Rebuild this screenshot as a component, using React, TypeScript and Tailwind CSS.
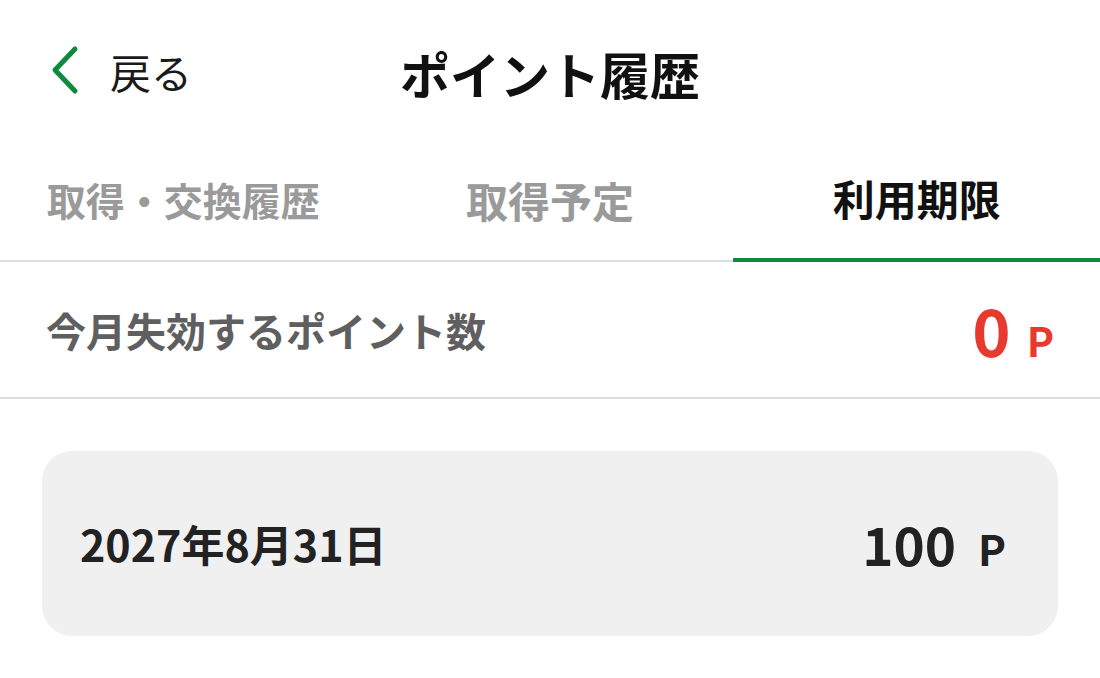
import React from "react";

const font = {
  fontFamily: '"Noto Sans CJK JP", "Noto Sans", sans-serif',
};

// first label is shrunk to fit, like in the app
const tabs = [
  { label: "取得・交換履歴", size: "text-[39px]" },
  { label: "取得予定", size: "text-[42px]" },
  { label: "利用期限", size: "text-[42px]" },
];

// back chevron
const ChevronLeft = () => (
  <svg width="30" height="50" viewBox="0 0 30 50" fill="none" className="-mt-[8px]">
    <polyline
      points="25,4 5,25 25,46"
      stroke="#0d8a3e"
      strokeWidth="5"
      strokeLinecap="round"
      strokeLinejoin="round"
    />
  </svg>
);

const App = () => {
  const active = 2;

  return (
    <div className="w-[1100px] h-[678px] bg-white overflow-hidden" style={font}>
      {/* header */}
      <div className="grid grid-cols-[1fr_auto_1fr] items-center h-[148px]">
        <div className="flex items-center pl-[50px] gap-[30px]">
          <ChevronLeft />
          <span className="text-[41px] text-[#1a1a1a] -mt-[4px]">戻る</span>
        </div>
        <h1 className="text-[50px] font-bold text-[#111] -mt-[2px]">ポイント履歴</h1>
        <div />
      </div>

      {/* tabs */}
      <div className="grid grid-cols-3 h-[114px]">
        {tabs.map((tab, i) => (
          <div
            key={tab.label}
            className={
              i === active
                ? `flex items-center justify-center border-b-4 border-[#0d8a3e] text-[#111] font-bold pb-[12px] ${tab.size}`
                : `flex items-center justify-center border-b-2 border-[#dddddd] text-[#9a9a9a] font-bold pb-[10px] ${tab.size}`
            }
          >
            {tab.label}
          </div>
        ))}
      </div>

      {/* expiring this month */}
      <div className="flex items-center justify-between h-[137px] pl-[46px] pr-[46px] border-b-2 border-[#dddddd]">
        <span className="text-[40px] font-bold text-[#5f5f5f]">今月失効するポイント数</span>
        <div className="flex items-baseline gap-[16px] text-[#e8392f] font-bold">
          <span className="text-[65px] leading-none">0</span>
          <span className="text-[41px] leading-none">P</span>
        </div>
      </div>

      {/* expiry list */}
      <div className="px-[42px] pt-[52px]">
        <div className="flex items-center justify-between h-[185px] rounded-[30px] bg-[#f0f0f0] pl-[38px] pr-[52px]">
          <span className="text-[43px] font-bold text-[#222]">2027年8月31日</span>
          <div className="flex items-baseline gap-[22px] text-[#222] font-bold">
            <span className="text-[53px] leading-none">100</span>
            <span className="text-[42px] leading-none">P</span>
          </div>
        </div>
      </div>
    </div>
  );
};

export default App;
